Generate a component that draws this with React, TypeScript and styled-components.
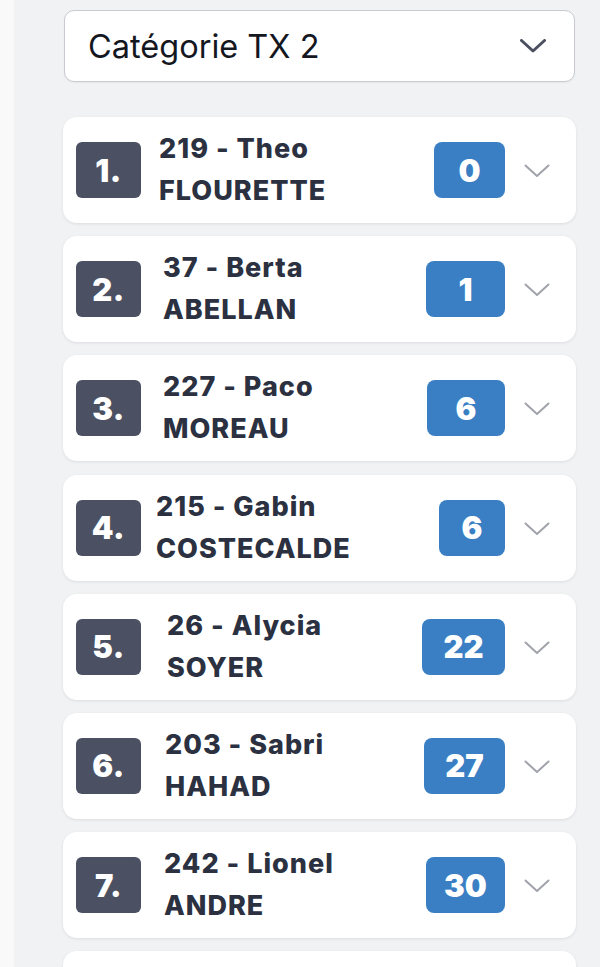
import styled, { createGlobalStyle } from "styled-components";

const GlobalStyle = createGlobalStyle`
    html, body {
        margin: 0;
        padding: 0;
        background: #f1f2f4;
        font-family: Inter, "Noto Sans", "Liberation Sans", sans-serif;
    }
    * {
        box-sizing: border-box;
    }
`;

const ranking = [
    { rank: 1, bib: 219, first: "Theo", last: "FLOURETTE", points: 0, nameOffset: 18, badgeWidth: 71 },
    { rank: 2, bib: 37, first: "Berta", last: "ABELLAN", points: 1, nameOffset: 22, badgeWidth: 79 },
    { rank: 3, bib: 227, first: "Paco", last: "MOREAU", points: 6, nameOffset: 22, badgeWidth: 78 },
    { rank: 4, bib: 215, first: "Gabin", last: "COSTECALDE", points: 6, nameOffset: 15, badgeWidth: 66 },
    { rank: 5, bib: 26, first: "Alycia", last: "SOYER", points: 22, nameOffset: 26, badgeWidth: 83 },
    { rank: 6, bib: 203, first: "Sabri", last: "HAHAD", points: 27, nameOffset: 24, badgeWidth: 81 },
    { rank: 7, bib: 242, first: "Lionel", last: "ANDRE", points: 30, nameOffset: 23, badgeWidth: 79 },
    { rank: 8, bib: 0, first: "", last: "", points: 0, nameOffset: 22, badgeWidth: 79 },
];

const Chevron = ({ color, width }: { color: string; width: number }) => (
    <svg width="26" height="14" viewBox="0 0 26 14" fill="none">
        <path d="M1.5 1.5 L13 12 L24.5 1.5" stroke={color} strokeWidth={width} strokeLinecap="round" strokeLinejoin="round" />
    </svg>
);

const App = () => {
    return (
        <Page>
            <GlobalStyle />
            <Strip />
            <Main>
                <Select>
                    <SelectLabel>Catégorie TX 2</SelectLabel>
                    <Chevron color="#4b5060" width={3} />
                </Select>
                <List>
                    {ranking.map((r) => (
                        <Card key={r.rank}>
                            {r.bib > 0 && (
                                <>
                                    <Rank>{r.rank}.</Rank>
                                    <Name $offset={r.nameOffset}>
                                        <span>
                                            {r.bib} - {r.first}
                                        </span>
                                        <span>{r.last}</span>
                                    </Name>
                                    <Points $width={r.badgeWidth}>{r.points}</Points>
                                    <Toggle>
                                        <Chevron color="#a0a3aa" width={2} />
                                    </Toggle>
                                </>
                            )}
                        </Card>
                    ))}
                </List>
            </Main>
        </Page>
    );
};

const Page = styled.div`
    display: flex;
    height: 967px;
    overflow: hidden;
`;

const Strip = styled.div`
    flex: 0 0 14px;
    background: #f9f9fa;
`;

const Main = styled.main`
    flex: 1;
    padding: 10px 24px 0 49px;
    display: flex;
    flex-direction: column;
`;

const Select = styled.div`
    height: 72px;
    flex-shrink: 0;
    display: flex;
    align-items: center;
    justify-content: space-between;
    padding: 0 28px 0 23px;
    margin: 0 1px;
    background: #fff;
    border: 1.5px solid #c9cbd0;
    border-radius: 10px;
    box-shadow: 0 1px 2px rgba(0, 0, 0, 0.05);
`;

const SelectLabel = styled.span`
    font-size: 32.5px;
    font-weight: 400;
    color: #15171f;
`;

const List = styled.div`
    margin-top: 35px;
    display: flex;
    flex-direction: column;
    gap: 13.2px;
`;

const Card = styled.div`
    height: 106px;
    flex-shrink: 0;
    display: flex;
    align-items: center;
    padding: 0 26px 0 13px;
    background: #fff;
    border-radius: 14px;
    box-shadow: 0 1px 3px rgba(30, 35, 50, 0.1);
`;

const Rank = styled.div`
    flex: 0 0 65px;
    height: 56px;
    display: flex;
    align-items: center;
    justify-content: center;
    background: #4b5162;
    border-radius: 6px;
    color: #fff;
    font-size: 31px;
    font-weight: 900;
    letter-spacing: 0.5px;
`;

const Name = styled.div<{ $offset: number }>`
    flex: 1;
    display: flex;
    flex-direction: column;
    padding-left: ${(p) => p.$offset}px;
    font-size: 27px;
    font-weight: 800;
    line-height: 42px;
    letter-spacing: 1px;
    color: #2b3140;
`;

const Points = styled.div<{ $width: number }>`
    flex: 0 0 ${(p) => p.$width}px;
    height: 56px;
    display: flex;
    align-items: center;
    justify-content: center;
    background: #3a7fc4;
    border-radius: 8px;
    color: #fff;
    font-size: 31px;
    font-weight: 900;
`;

const Toggle = styled.div`
    flex: 0 0 26px;
    margin-left: 19px;
    display: flex;
    align-items: center;
    padding-top: 2px;
`;

export default App;
